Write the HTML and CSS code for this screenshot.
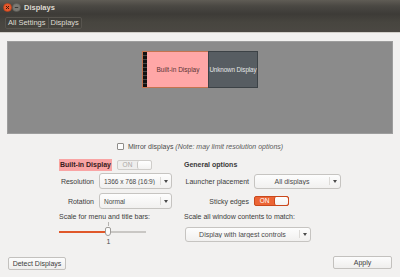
FILE: index.html
```html
<!DOCTYPE html>
<html lang="en">
<head>
    <meta charset="UTF-8">
    <meta name="viewport" content="width=device-width, initial-scale=1.0">
    <title>Displays</title>
    <link rel="stylesheet" href="styles.css">
</head>
<body>
    <header class="titlebar">
        <div class="title-row">
            <svg class="wbtn" width="9" height="9" viewBox="0 0 9 9">
                <circle cx="4.5" cy="4.5" r="4" fill="#e8592c" stroke="#b63e17" stroke-width="0.6"/>
                <path d="M3 3 L6 6 M6 3 L3 6" stroke="#3a1a0e" stroke-width="1"/>
            </svg>
            <svg class="wbtn" width="9" height="9" viewBox="0 0 9 9">
                <circle cx="4.5" cy="4.5" r="4" fill="#7b7973" stroke="#5d5b56" stroke-width="0.6"/>
                <path d="M2.8 4.5 L6.2 4.5" stroke="#3a3935" stroke-width="1"/>
            </svg>
            <span class="title">Displays</span>
        </div>
        <div class="toolbar">
            <div class="crumbs">
                <span>All Settings</span>
                <span>Displays</span>
            </div>
        </div>
    </header>

    <main class="content">
        <div class="preview">
            <div class="monitor builtin">
                <div class="launcher"></div>
                <span>Built-in Display</span>
            </div>
            <div class="monitor unknown">
                <span>Unknown Display</span>
            </div>
        </div>

        <div class="mirror">
            <span class="check"></span>
            <span>Mirror displays <em>(Note: may limit resolution options)</em></span>
        </div>

        <div class="settings">
            <div class="head-left">
                <span class="badge">Built-in Display</span>
                <span class="switch disabled"><span class="on">ON</span><span class="knob"></span></span>
            </div>
            <div class="head-right">General options</div>

            <div class="label">Resolution</div>
            <div class="combo short"><span class="combo-text">1366 x 768 (16:9)</span><span class="arrow"></span></div>
            <div class="label">Launcher placement</div>
            <div class="combo mid"><span class="combo-text center">All displays</span><span class="arrow"></span></div>

            <div class="label">Rotation</div>
            <div class="combo short"><span class="combo-text">Normal</span><span class="arrow"></span></div>
            <div class="label">Sticky edges</div>
            <div><span class="switch active"><span class="on">ON</span><span class="knob"></span></span></div>

            <div class="wide-left">Scale for menu and title bars:</div>
            <div class="wide-right">Scale all window contents to match:</div>

            <div class="wide-left">
                <div class="slider">
                    <div class="tick"></div>
                    <div class="track"><div class="fill" style="width: 49px"></div></div>
                    <div class="handle"></div>
                    <div class="value">1</div>
                </div>
            </div>
            <div class="wide-right">
                <div class="combo long"><span class="combo-text center">Display with largest controls</span><span class="arrow"></span></div>
            </div>
        </div>

        <div class="actions">
            <button class="btn detect">Detect Displays</button>
            <button class="btn apply">Apply</button>
        </div>
    </main>
</body>
</html>
```

FILE: styles.css
```css
body {
    margin: 0;
    width: 400px;
    height: 277px;
    overflow: hidden;
    background: #f2f1f0;
    color: #3c3c3c;
    font-family: "Liberation Sans", Arial, sans-serif;
    font-size: 7px;
}
.titlebar {
    height: 32px;
    border-bottom: 1px solid #d2cfca;
    background: linear-gradient(#5f5c55 0, #4a4843 6px, #3d3b37 14px, #47453f 22px, #4b4843 32px);
}
.title-row {
    height: 15px;
    display: flex;
    align-items: center;
    padding-left: 3px;
}
.title {
    margin-left: 3px;
    color: #dfdbd2;
    font-weight: bold;
    font-size: 7.5px;
}
.toolbar {
    height: 17px;
    padding-left: 5px;
    padding-top: 2px;
    box-sizing: border-box;
}
.crumbs {
    display: inline-flex;
    height: 12px;
    border: 1px solid #57544e;
    border-radius: 2px;
    box-sizing: border-box;
    background: rgba(0, 0, 0, 0.05);
}
.crumbs span {
    color: #dfdbd2;
    font-size: 7.5px;
    line-height: 10px;
    padding: 0 2px;
}
.crumbs span + span {
    border-left: 1px solid #57544e;
}
.content {
    padding: 8px 7px 0;
}
.preview {
    position: relative;
    height: 93px;
    box-sizing: border-box;
    background: #8b8b8b;
    border: 1px solid #9d9d9d;
}
.monitor {
    position: absolute;
    top: 9px;
    height: 37px;
    box-sizing: border-box;
    display: flex;
    align-items: center;
    justify-content: center;
    font-size: 6.5px;
    white-space: nowrap;
}
.builtin {
    left: 134px;
    width: 67px;
    background: #ffa7a7;
    border: 1px solid #c5734f;
    color: #5b3434;
    padding-left: 5px;
}
.launcher {
    position: absolute;
    left: 0;
    top: 0;
    bottom: 0;
    width: 4px;
    background: repeating-linear-gradient(#111 0, #111 3px, #444 3px, #444 4px);
}
.unknown {
    left: 200px;
    width: 50px;
    background: #575d62;
    border: 1px solid #3c4246;
    color: #e4e6e7;
    font-size: 6.3px;
    letter-spacing: -0.1px;
}
.mirror {
    height: 10px;
    margin-top: 7px;
    display: flex;
    align-items: center;
    justify-content: center;
    gap: 4px;
    color: #4a4a4a;
}
.mirror em {
    color: #5a5a5a;
}
.check {
    width: 5px;
    height: 5px;
    border: 1px solid #8e8c89;
    border-radius: 1px;
    background: #fdfdfd;
}
.settings {
    margin-top: 7px;
    padding-left: 52px;
    display: grid;
    grid-template-columns: 40px 85px 70px 100px;
    grid-template-rows: 13px 20px 20px 10px 25px;
    align-items: center;
}
.head-left {
    grid-column: 1 / 3;
    display: flex;
    align-items: center;
    gap: 5px;
}
.badge {
    height: 12px;
    line-height: 12px;
    padding: 0 1px;
    background: #f9a4a4;
    color: #3a2020;
    font-weight: bold;
}
.head-right {
    grid-column: 3 / 5;
    font-weight: bold;
    color: #3a3a3a;
}
.label {
    text-align: right;
    padding-right: 5px;
    white-space: nowrap;
}
.wide-left {
    grid-column: 1 / 3;
    align-self: stretch;
    display: flex;
    align-items: center;
}
.wide-right {
    grid-column: 3 / 5;
    align-self: stretch;
    display: flex;
    align-items: center;
}
.switch {
    display: inline-flex;
    width: 35px;
    height: 10px;
    box-sizing: border-box;
    border-radius: 2px;
    overflow: hidden;
    font-size: 6.5px;
}
.switch .on {
    width: 19px;
    text-align: center;
    line-height: 8px;
}
.switch .knob {
    flex: 1;
    background: linear-gradient(#ffffff, #f3f2f1);
    border-left: 1px solid #c8c6c3;
    border-radius: 2px;
}
.switch.disabled {
    border: 1px solid #cfcdca;
    background: #efeeed;
    color: #aaa8a5;
}
.switch.active {
    border: 1px solid #c9481c;
    background: #ec6535;
    color: #ffffff;
}
.switch.active .knob {
    border-left-color: #c9481c;
}
.combo {
    display: flex;
    height: 16px;
    box-sizing: border-box;
    border: 1px solid #c6c4c1;
    border-radius: 3px;
    background: linear-gradient(#fdfdfd, #f1f0ef);
    color: #4a4a4a;
    align-items: center;
}
.combo.short {
    width: 73px;
}
.combo.mid {
    width: 87px;
    height: 15px;
}
.combo.long {
    width: 126px;
    height: 15px;
    margin-top: 1px;
    margin-left: 1px;
}
.combo-text {
    flex: 1;
    padding-left: 4px;
    white-space: nowrap;
    overflow: hidden;
    font-size: 6.6px;
    letter-spacing: -0.05px;
}
.combo-text.center {
    text-align: center;
    padding-left: 0;
    font-size: 7px;
    letter-spacing: 0;
}
.arrow {
    width: 10px;
    height: 8px;
    border-left: 1px solid #dcdad7;
    position: relative;
}
.arrow::after {
    content: "";
    position: absolute;
    left: 3px;
    top: 3px;
    border-left: 2px solid transparent;
    border-right: 2px solid transparent;
    border-top: 3px solid #4a4a4a;
}
.slider {
    position: relative;
    width: 87px;
    height: 25px;
}
.tick {
    position: absolute;
    left: 49px;
    top: 1px;
    width: 1px;
    height: 4px;
    background: #b5b3b0;
}
.track {
    position: absolute;
    left: 0;
    right: 0;
    top: 10px;
    height: 2px;
    background: #c9c7c4;
}
.fill {
    height: 2px;
    background: #e0582a;
}
.handle {
    position: absolute;
    left: 46px;
    top: 6px;
    width: 6px;
    height: 9px;
    box-sizing: border-box;
    border: 1px solid #9e9c99;
    border-radius: 2px 2px 3px 3px;
    background: #fbfbfb;
}
.value {
    position: absolute;
    left: 46px;
    width: 7px;
    top: 17px;
    text-align: center;
    color: #4a4a4a;
}
.actions {
    display: flex;
    justify-content: space-between;
    margin-top: 10px;
    padding: 0 1px;
}
.btn {
    height: 13px;
    box-sizing: border-box;
    padding: 0;
    border: 1px solid #c3c1be;
    border-radius: 2px;
    background: linear-gradient(#fcfcfc, #efeeed);
    font-family: inherit;
    font-size: 7px;
    color: #3c3c3c;
}
.detect {
    width: 58px;
    margin-top: 1px;
}
.apply {
    width: 59px;
}
```
